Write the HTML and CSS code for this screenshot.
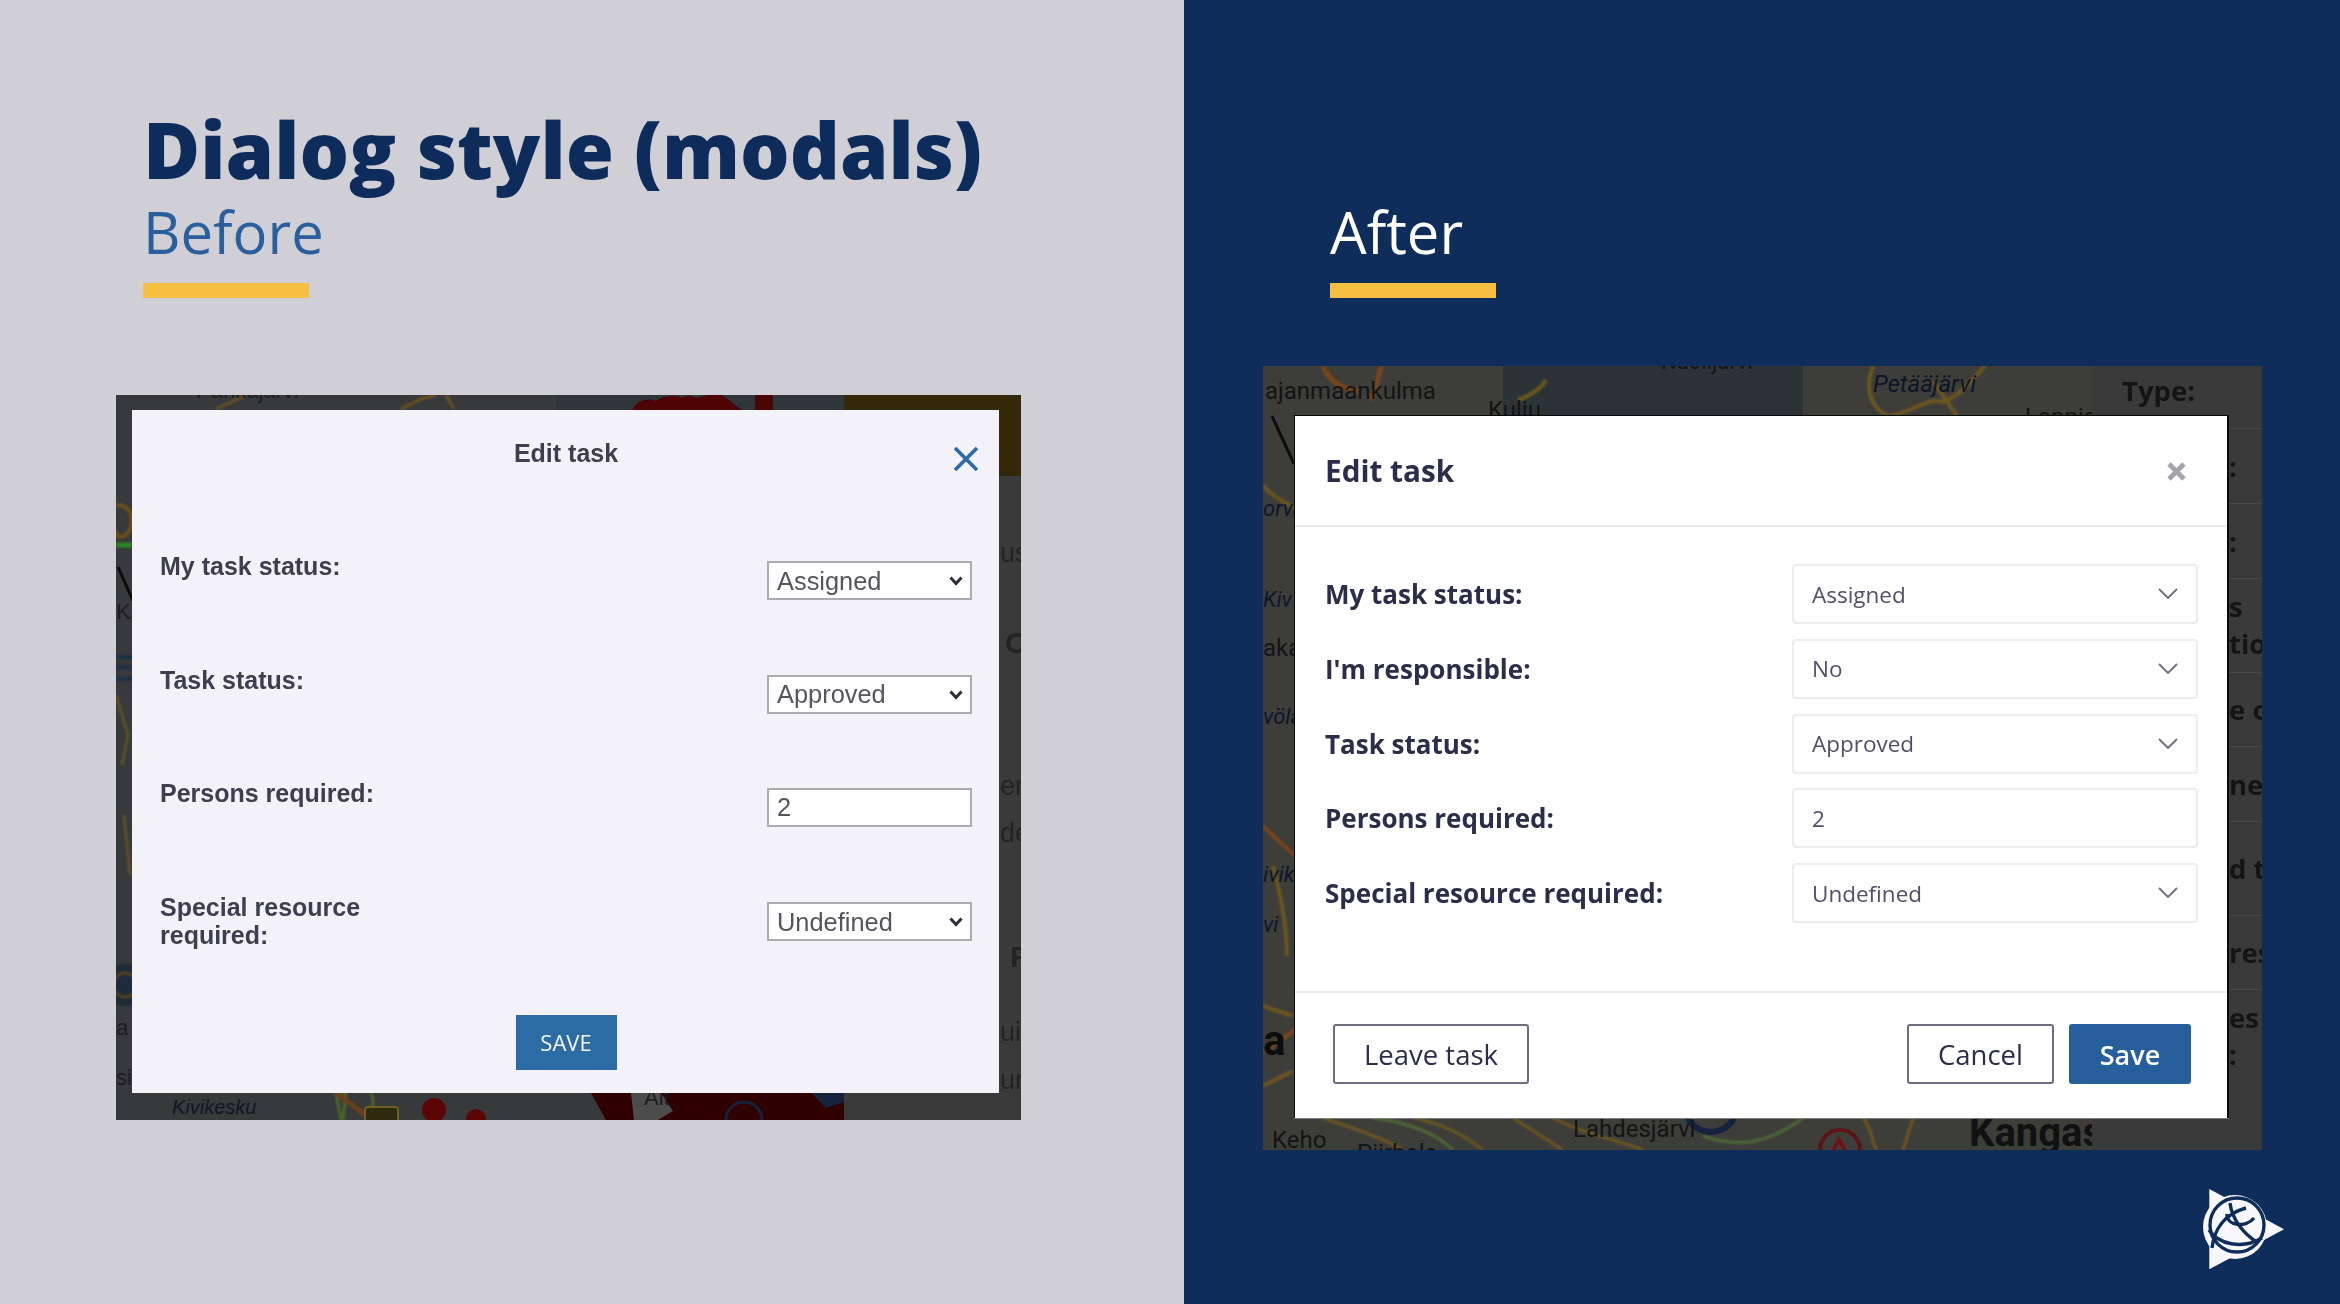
FILE: index.html
```html
<!DOCTYPE html>
<html lang="en">
<head>
<meta charset="utf-8">
<title>Dialog style (modals)</title>
<link rel="stylesheet" href="styles.css">
</head>
<body>
<main class="slide">
  <section class="panel panel-before">
    <header class="heading">
      <h1 class="title">Dialog style (modals)</h1>
      <h2 class="sub sub-before">Before</h2>
      <div class="bar"></div>
    </header>
    <div class="shot shot-before">
      <svg class="map" width="728" height="725" viewBox="0 0 728 725">
        <rect width="728" height="725" fill="#37393b"/>
        <rect x="440" width="288" height="15" fill="#2e363a"/>
        <g class="roads">
          <path d="M0 110c16 0 18 14 14 24s-14 10-14 2" fill="none" stroke="#6d5019" stroke-width="4"/>
          <path d="M0 150h16" stroke="#2c8a22" stroke-width="5"/>
          <path d="M0 262h16M0 272h16M0 284h16" stroke="#1e3147" stroke-width="4"/>
          <path d="M0 300l12 40-6 30M8 420l6 60" fill="none" stroke="#5f5128" stroke-width="3"/>
          <path d="M285 14l20-10 15-4M100 14l30-14M330 0l8 14" fill="none" stroke="#6e5120" stroke-width="3"/>
          <circle cx="9" cy="590" r="21" fill="#1d2b3a"/>
          <circle cx="9" cy="590" r="12" fill="none" stroke="#5a4124" stroke-width="3"/>
          <path d="M225 725l-5-27 10-1-3 28M255 698c4 10 2 20 0 27" fill="none" stroke="#4b6a2c" stroke-width="3"/>
          <path d="M220 698l32 24" stroke="#6e3f18" stroke-width="5"/>
        </g>
        <path d="M2 172l15 34" stroke="#0b0b0b" stroke-width="3"/>
        <path d="M516 15c4-9 16-13 24-9 8-6 22-6 26-3 5-3 10-3 14 0l12-3h14l20 15z" fill="#4e0405"/>
        <rect x="639" width="18" height="15" fill="#4a0505"/>
        <rect x="249" y="712" width="33" height="20" rx="3" fill="#2f2a10" stroke="#71601c" stroke-width="2"/>
        <circle cx="318" cy="715" r="12" fill="#5c0505"/>
        <circle cx="360" cy="724" r="10" fill="#5c0505"/>
        <path d="M475 698h225l28 0v27H490z" fill="#2e0000"/>
        <path d="M515 698h30l12 18-15 9h-24z" fill="#4c4c4c"/>
        <path d="M695 698h33v9l-18 6z" fill="#16233c"/>
        <path d="M610 725a18 18 0 0 1 36 0" fill="none" stroke="#16233c" stroke-width="3"/>
        <text class="map-t" x="80" y="3">Pahkajärvi</text>
        <text class="map-i" x="56" y="719">Kivikesku</text>
        <text class="map-t" x="0" y="224">Kä</text>
        <text class="map-t" x="0" y="640">a</text>
        <text class="map-t" x="0" y="690">si</text>
        <text class="map-t" x="528" y="710">Alt</text>
      </svg>
      <aside class="side-before">
        <div class="olive"></div>
        <div class="frag f1">us:</div>
        <div class="frag f2 frag-bold">C</div>
        <div class="frag f3">err</div>
        <div class="frag f4">de</div>
        <div class="frag f5 frag-bold">F</div>
        <div class="frag f6">uir</div>
        <div class="frag f7">ur</div>
      </aside>
      <form class="modal-before">
        <h3 class="mb-title">Edit task</h3>
        <svg class="mb-close" width="24" height="24" viewBox="0 0 24 24"><path d="M1 1l22 22M23 1L1 23" fill="none" stroke="#2e6aa5" stroke-width="3.6"/></svg>
        <div class="mb-row">
          <label class="mb-label">My task status:</label>
          <div class="mb-field"><select class="mb-control"><option>Assigned</option></select><svg class="mb-chev" width="14" height="10" viewBox="0 0 14 10"><path d="M1.5 1.5L7 7.5l5.500-6" fill="none" stroke="#2f2f3a" stroke-width="3"/></svg></div>
        </div>
        <div class="mb-row">
          <label class="mb-label">Task status:</label>
          <div class="mb-field"><select class="mb-control"><option>Approved</option></select><svg class="mb-chev" width="14" height="10" viewBox="0 0 14 10"><path d="M1.5 1.5L7 7.5l5.500-6" fill="none" stroke="#2f2f3a" stroke-width="3"/></svg></div>
        </div>
        <div class="mb-row">
          <label class="mb-label">Persons required:</label>
          <div class="mb-field"><input class="mb-control mb-input" value="2"></div>
        </div>
        <div class="mb-row">
          <label class="mb-label">Special resource required:</label>
          <div class="mb-field"><select class="mb-control"><option>Undefined</option></select><svg class="mb-chev" width="14" height="10" viewBox="0 0 14 10"><path d="M1.5 1.5L7 7.5l5.500-6" fill="none" stroke="#2f2f3a" stroke-width="3"/></svg></div>
        </div>
        <button class="mb-save" type="button">SAVE</button>
      </form>
    </div>
  </section>

  <section class="panel panel-after">
    <header class="heading heading-after">
      <h2 class="sub sub-after">After</h2>
      <div class="bar"></div>
    </header>
    <div class="shot shot-after">
      <svg class="map" width="829" height="784" viewBox="0 0 829 784">
        <rect width="829" height="784" fill="#3d3d3a"/>
        <rect x="240" width="300" height="60" fill="#2c3336"/>
        <g class="roads">
          <path d="M60 0c6 16 20 22 36 26M118 0c-2 14-6 24-10 34" fill="none" stroke="#7a4519" stroke-width="5"/>
          <path d="M255 34c12-4 24-12 28-20" fill="none" stroke="#6e571e" stroke-width="4"/>
          <path d="M610 0c-8 20-4 40 14 50 20 0 40-20 56-14 20-8 30-24 42-36M670 15l24 35" fill="none" stroke="#6e571e" stroke-width="4"/>
          <path d="M0 120c10 10 20 16 32 22M0 640l30 10M0 720l30-15M10 500c8 30 14 60 14 90" fill="none" stroke="#6e571e" stroke-width="4"/>
          <path d="M0 686l32-22" stroke="#7a4519" stroke-width="5"/>
          <path d="M0 460l32 30" stroke="#7a4519" stroke-width="4"/>
          <path d="M60 752c30 10 60 20 80 32M150 752c30 6 50 16 70 32M250 752l50 32M290 752c40 20 60 20 90 32M600 752c10 12 8 24 14 32M650 752l-10 32" fill="none" stroke="#6e571e" stroke-width="3"/>
          <path d="M110 752c30 4 60 12 80 32M440 770c40 14 70 4 100-18" fill="none" stroke="#4d6b35" stroke-width="3"/>
        </g>
        <path d="M9 50l22 48" stroke="#0b0b0b" stroke-width="3"/>
        <path d="M425 752a26 26 0 0 0 46 0" fill="none" stroke="#14233f" stroke-width="6"/>
        <circle cx="577" cy="784" r="20" fill="none" stroke="#5c1416" stroke-width="4"/>
        <path d="M570 784l6 -10 6 10" fill="none" stroke="#6e1214" stroke-width="4"/>
        <text class="map-r" x="2" y="33">ajanmaankulma</text>
        <text class="map-r" x="225" y="52">Kuliu</text>
        <text class="map-r map-sm" x="398" y="3">Nuolijärvi</text>
        <text class="map-p" x="610" y="26">Petääjärvi</text>
        <text class="map-r" x="762" y="59">Lappis</text>
        <text class="map-ik" x="0" y="150">orva</text>
        <text class="map-ik" x="0" y="241">Kiv</text>
        <text class="map-r" x="0" y="290">aka</text>
        <text class="map-ik" x="0" y="358">völä</text>
        <text class="map-ik" x="0" y="516">ivik</text>
        <text class="map-ik" x="0" y="566">vi</text>
        <text class="map-b" x="0" y="689">a</text>
        <text class="map-r" x="9" y="782">Keho</text>
        <text class="map-r" x="94" y="795">Piirhola</text>
        <text class="map-r" x="310" y="771">Lahdesjärvi</text>
        <text class="map-k" x="706" y="780">Kangas</text>
      </svg>
      <aside class="side-after">
        <div class="sa-row sa-type">Type:</div>
        <div class="sa-row sa-r1">:</div>
        <div class="sa-row sa-r1">:</div>
        <div class="sa-row sa-two">s<br>tion</div>
        <div class="sa-row sa-r3">e of</div>
        <div class="sa-row sa-r1">ne</div>
        <div class="sa-row sa-r2">d to</div>
        <div class="sa-row sa-r3">res</div>
        <div class="sa-row sa-r4">es<br>:</div>
      </aside>
      <form class="modal-after">
        <header class="ma-head">
          <h3 class="ma-title">Edit task</h3>
          <svg class="ma-close" width="19" height="19" viewBox="0 0 19 19"><path d="M2 2l15 15M17 2L2 17" fill="none" stroke="#a4a4ac" stroke-width="4.8"/></svg>
        </header>
        <div class="ma-body">
          <label class="ma-label">My task status:</label>
          <div class="ma-field"><select class="ma-control"><option>Assigned</option></select><svg class="ma-chev" width="20" height="11" viewBox="0 0 20 11"><path d="M1 1l9 9 9-9" fill="none" stroke="#6d6d7c" stroke-width="1.8"/></svg></div>
          <label class="ma-label">I'm responsible:</label>
          <div class="ma-field"><select class="ma-control"><option>No</option></select><svg class="ma-chev" width="20" height="11" viewBox="0 0 20 11"><path d="M1 1l9 9 9-9" fill="none" stroke="#6d6d7c" stroke-width="1.8"/></svg></div>
          <label class="ma-label">Task status:</label>
          <div class="ma-field"><select class="ma-control"><option>Approved</option></select><svg class="ma-chev" width="20" height="11" viewBox="0 0 20 11"><path d="M1 1l9 9 9-9" fill="none" stroke="#6d6d7c" stroke-width="1.8"/></svg></div>
          <label class="ma-label">Persons required:</label>
          <div class="ma-field"><input class="ma-control" value="2"></div>
          <label class="ma-label">Special resource required:</label>
          <div class="ma-field"><select class="ma-control"><option>Undefined</option></select><svg class="ma-chev" width="20" height="11" viewBox="0 0 20 11"><path d="M1 1l9 9 9-9" fill="none" stroke="#6d6d7c" stroke-width="1.8"/></svg></div>
        </div>
        <footer class="ma-foot">
          <button class="ma-btn ma-leave" type="button">Leave task</button>
          <button class="ma-btn ma-cancel" type="button">Cancel</button>
          <button class="ma-btn ma-save" type="button">Save</button>
        </footer>
      </form>
    </div>
    <svg class="logo" width="130" height="110" viewBox="0 0 130 110" aria-label="Logo">
      <path d="M29.3 19L104 59.3 29.3 99.3z" fill="#f8f8fc"/>
      <circle cx="55" cy="57" r="32" fill="#f8f8fc"/>
      <circle cx="57" cy="55" r="27" fill="none" stroke="#0e2d5b" stroke-width="3.4"/>
      <path d="M32 78C34 60 44 44 66 38M29 60C38 74 62 80 82 68M50 33C52 50 64 64 78 73M47 44C46 56 66 58 74 48" fill="none" stroke="#0e2d5b" stroke-width="3.4"/>
    </svg>
  </section>
</main>
</body>
</html>
```

FILE: styles.css
```css
* { box-sizing: border-box; }
html, body { margin: 0; padding: 0; }
body { width: 2340px; height: 1304px; overflow: hidden; font-family: "Open Sans", sans-serif; }

.slide { display: flex; width: 2340px; height: 1304px; }
.panel { position: relative; height: 100%; }
.panel-before { width: 1184px; background: #d0cfd6; padding: 107px 0 0 116px; }
.panel-after { flex: 1; background: #0e2d5b; padding: 200px 0 0 79px; }

.heading { padding-left: 27px; height: 191px; }
.heading-after { padding-left: 67px; height: 98px; }
.title { margin: 0 0 9px; font-size: 78px; line-height: 84px; font-weight: 800; color: #0e2c5b; white-space: nowrap; }
.sub { margin: 0; font-size: 58px; line-height: 64px; font-weight: 400; white-space: nowrap; }
.sub-before { color: #2a5f9e; }
.sub-after { color: #ffffff; }
.bar { margin-top: 19px; width: 166px; height: 15px; background: #f6bf41; }

.shot { position: relative; display: flex; overflow: hidden; }
.shot-before { width: 905px; height: 725px; margin-top: 97px; }
.shot-after { width: 999px; height: 784px; margin-top: 68px; }
.map { display: block; flex: none; }
.roads { filter: blur(1.2px); }
.map-t { font: 22px "Liberation Sans", sans-serif; fill: #1d1d22; }
.map-i { font: italic 20px "Liberation Sans", sans-serif; fill: #10162a; }
.map-r { font: 24px Roboto, sans-serif; fill: #141414; }
.map-sm { font-size: 22px; }
.map-p { font: italic 24px Roboto, sans-serif; fill: #0e1526; }
.map-ik { font: italic 22px Roboto, sans-serif; fill: #10162a; }
.map-b { font: 700 42px Roboto, sans-serif; fill: #0d0d0d; }
.map-k { font: 700 40px Roboto, sans-serif; fill: #111111; }

.side-before { flex: 1; background: #3a3a3a; font: 27px/30px "Liberation Sans", sans-serif; color: #232323; white-space: nowrap; overflow: hidden; filter: blur(.4px); }
.olive { height: 81px; background: #33280a; }
.frag { height: 30px; padding-left: 156px; }
.frag-bold { font-weight: 700; font-size: 30px; }
.f1 { margin-top: 62px; }
.f2 { margin-top: 60px; padding-left: 161px; }
.f3 { margin-top: 113px; }
.f4 { margin-top: 17px; }
.f5 { margin-top: 94px; padding-left: 166px; }
.f6 { margin-top: 45px; }
.f7 { margin-top: 18px; }

.modal-before { position: absolute; left: 16px; top: 15px; width: 867px; height: 683px; background: #f2f2f8; display: flex; flex-direction: column; padding: 29px 27px 0 28px; color: #3e3e50; font-family: "Liberation Sans", sans-serif; filter: blur(.4px); }
.mb-title { margin: 0 0 85px; text-align: center; font-size: 25px; line-height: 28px; font-weight: 700; }
.mb-close { position: absolute; left: 822px; top: 37px; }
.mb-row { display: flex; justify-content: space-between; height: 113.7px; }
.mb-label { width: 250px; font-size: 25px; line-height: 28px; font-weight: 700; }
.mb-field { position: relative; width: 205px; height: 39px; margin-top: 9px; }
.mb-control { display: block; width: 100%; height: 100%; appearance: none; border: 2px solid #ababb3; border-radius: 0; background: #fff; color: #55555f; font: 25.400px "Liberation Sans", sans-serif; padding: 0 4px 0 8px; outline: none; }
.mb-chev { position: absolute; right: 9px; top: 15px; pointer-events: none; }
.mb-save { align-self: center; width: 101px; height: 55px; margin-top: 8px; border: 0; background: #2d6ba5; color: #f3f6fb; font: 500 22px "Open Sans", sans-serif; padding: 0; }

.side-after { flex: 1; background: #3a3a3a; font: 700 27.5px/37px "Open Sans", sans-serif; color: #141414; white-space: nowrap; overflow: hidden; display: flex; flex-direction: column; filter: blur(.4px); }
.sa-row { flex: none; display: flex; align-items: center; padding-left: 137px; border-top: 1.5px solid #494949; }
.sa-row:first-child { border-top: 0; }
.sa-type { height: 62px; padding: 0 0 14px 30px; }
.sa-r1 { height: 75px; }
.sa-r2 { height: 94px; }
.sa-r3 { height: 74px; }
.sa-two { display: block; height: 94px; padding-top: 9px; }
.sa-r4 { display: block; height: 92px; padding-top: 9px; }

.modal-after { position: absolute; left: 31px; top: 49px; width: 935px; height: 703px; background: #fff; border: solid #0a0a0a; border-width: 1px 2px 0 1px; box-shadow: 0 1px 0 #808080; display: flex; flex-direction: column; filter: blur(.25px); }
.ma-head { flex: none; height: 111px; display: flex; align-items: center; justify-content: space-between; padding: 0 41px 0 30px; border-bottom: 2px solid #ebebf1; }
.ma-title { margin: 0; font-size: 29.7px; line-height: 40px; font-weight: 700; color: #2b2d4a; }
.ma-close { flex: none; margin-top: 2px; }
.ma-body { flex: 1; display: grid; grid-template-columns: 1fr 406px; grid-auto-rows: 60px; row-gap: 14.8px; align-items: center; padding: 37px 29px 0 30px; }
.ma-label { font-size: 26px; font-weight: 700; line-height: 36px; color: #2b2d4a; }
.ma-field { position: relative; height: 60px; }
.ma-control { display: block; width: 100%; height: 100%; appearance: none; border: 2px solid #ececf1; border-radius: 4px; background: #fff; color: #50506a; font: 22.5px "Open Sans", sans-serif; padding: 0 18px; outline: none; }
.ma-chev { position: absolute; right: 20px; top: 24px; pointer-events: none; }
.ma-foot { flex: none; height: 127px; display: flex; gap: 15px; padding: 31px 36px 0 38px; border-top: 2px solid #ebebf1; }
.ma-btn { height: 60px; border: 2px solid #6c6c80; border-radius: 3px; background: #fff; color: #2b2d4a; font: 27.5px "Open Sans", sans-serif; padding: 0; }
.ma-leave { width: 196px; margin-right: auto; }
.ma-cancel { width: 147px; }
.ma-save { width: 122px; background: #265f9b; border-color: #265f9b; color: #fff; font-weight: 600; font-size: 27px; }

.logo { position: absolute; left: 996px; top: 1170px; }
```
